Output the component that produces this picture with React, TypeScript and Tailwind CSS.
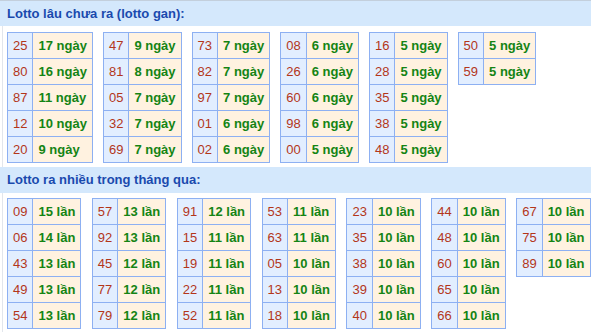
import React from "react"

type Row = [string, string]

const gan: Row[][] = [
  [["25", "17"], ["80", "16"], ["87", "11"], ["12", "10"], ["20", "9"]],
  [["47", "9"], ["81", "8"], ["05", "7"], ["32", "7"], ["69", "7"]],
  [["73", "7"], ["82", "7"], ["97", "7"], ["01", "6"], ["02", "6"]],
  [["08", "6"], ["26", "6"], ["60", "6"], ["98", "6"], ["00", "5"]],
  [["16", "5"], ["28", "5"], ["35", "5"], ["38", "5"], ["48", "5"]],
  [["50", "5"], ["59", "5"]],
]

const nhieu: Row[][] = [
  [["09", "15"], ["06", "14"], ["43", "13"], ["49", "13"], ["54", "13"]],
  [["57", "13"], ["92", "13"], ["45", "12"], ["77", "12"], ["79", "12"]],
  [["91", "12"], ["15", "11"], ["19", "11"], ["22", "11"], ["52", "11"]],
  [["53", "11"], ["63", "11"], ["05", "10"], ["13", "10"], ["18", "10"]],
  [["23", "10"], ["35", "10"], ["38", "10"], ["39", "10"], ["40", "10"]],
  [["44", "10"], ["48", "10"], ["60", "10"], ["65", "10"], ["66", "10"]],
  [["67", "10"], ["75", "10"], ["89", "10"]],
]

const LotoTable = ({ rows, unit }: { rows: Row[]; unit: string }) => (
  <table className="border-collapse">
    <tbody>
      {rows.map(([num, count], i) => (
        <tr key={i}>
          <td className="border border-[#8db0f2] bg-[#e2eeff] px-[5px] py-[5px] leading-[15px] text-center text-[#b3361a]">
            {num}
          </td>
          <td className="border border-[#8db0f2] bg-[#fff2e0] px-[5px] py-[5px] leading-[15px] font-bold text-[#148414] whitespace-nowrap">
            {count} {unit}
          </td>
        </tr>
      ))}
    </tbody>
  </table>
)

const Header = ({ title, top }: { title: string; top?: boolean }) => (
  <div
    className={`h-[26px] bg-[#d4e8fc] px-[7px] flex items-center font-bold text-[13px] text-[#1a4aae] ${
      top ? "border-t border-[#c3cfdc]" : ""
    }`}
  >
    {title}
  </div>
)

export default function App() {
  return (
    <div className="w-[591px] h-[332px] bg-white overflow-hidden font-['Liberation_Sans',Arial,sans-serif] text-[13px]">
      <Header title="Lotto lâu chưa ra (lotto gan):" top />
      <div className="ml-[2px] border-l border-[#e2e6ec] pl-[4px] pt-[6px] pb-[4px]">
        <div className="flex items-start gap-[10px]">
          {gan.map((rows, i) => (
            <LotoTable key={i} rows={rows} unit="ngày" />
          ))}
        </div>
      </div>
      <Header title="Lotto ra nhiều trong tháng qua:" />
      <div className="ml-[2px] border-l border-[#e2e6ec] pl-[4px] pt-[5px] pb-[4px]">
        <div className="flex items-start gap-[10.5px]">
          {nhieu.map((rows, i) => (
            <LotoTable key={i} rows={rows} unit="lần" />
          ))}
        </div>
      </div>
    </div>
  )
}
